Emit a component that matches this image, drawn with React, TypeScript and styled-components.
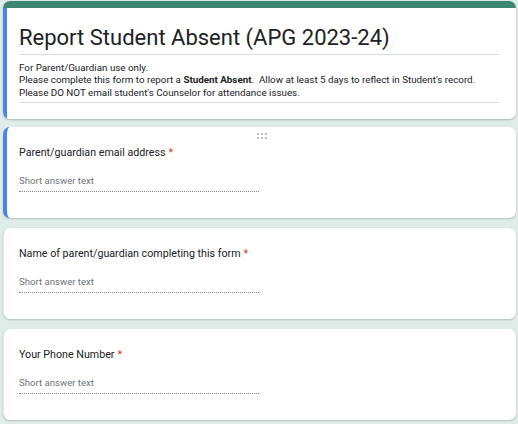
import React from "react";
import styled, { createGlobalStyle } from "styled-components";

const Global = createGlobalStyle`
  html, body { margin: 0; padding: 0; background: #e0ece8; }
  body { font-family: Roboto, "Liberation Sans", Arial, sans-serif; color: #202124; }
`;

const Page = styled.div`
  display: flex;
  flex-direction: column;
  gap: 10px;
  padding: 1px 2px 4px 3px;
`;

const HeaderCard = styled.div`
  background: #fff;
  border-radius: 7px;
  overflow: hidden;
  box-shadow: 0 1px 2px rgba(0,0,0,0.25);
  display: flex;
  flex-direction: column;
  margin-bottom: -2px;
`;

const TopBar = styled.div`
  height: 7px;
  background: #3d8670;
`;

const HeaderBody = styled.div`
  border-left: 4px solid #4a84f0;
  padding: 15px 17px 16px 12px;
`;

const Title = styled.h1`
  margin: 0;
  font-size: 22px;
  font-weight: 400;
  line-height: 30px;
  padding-bottom: 1px;
  border-bottom: 1px solid #dadce0;
  color: #202124;
`;

const Desc = styled.div`
  font-size: 9.8px;
  line-height: 12.4px;
  padding: 7px 0 3px;
  border-bottom: 1px solid #dadce0;
  color: #202124;
  b { font-weight: 700; }
`;

const QCard = styled.div<{ $active?: boolean }>`
  position: relative;
  background: #fff;
  border-radius: 7px;
  box-shadow: 0 1px 2px rgba(0,0,0,0.2);
  border-left: ${(p) => (p.$active ? "4px solid #4a84f0" : "1px solid #e3e5e8")};
  padding: 17px 16px 26px ${(p) => (p.$active ? "12px" : "15px")};
`;

const Handle = styled.div`
  position: absolute;
  top: 6px;
  left: 50%;
  transform: translateX(-50%);
  display: grid;
  grid-template-columns: repeat(3, 2px);
  gap: 2px;
  div { width: 2px; height: 2px; background: #bfc2c6; }
`;

const Label = styled.div`
  font-size: 10.7px;
  line-height: 18px;
  color: #202124;
`;

const Star = styled.span`
  color: #d93025;
  margin-left: 3px;
`;

const Answer = styled.div`
  margin-top: 12px;
  width: 240px;
  font-size: 9.6px;
  line-height: 14px;
  color: #70757a;
  padding-bottom: 3px;
  border-bottom: 1px dotted #80868b;
`;

const Question = ({ label, active }: { label: string; active?: boolean }) => (
  <QCard $active={active}>
    {active && (
      <Handle>
        {Array.from({ length: 6 }).map((_, i) => (
          <div key={i} />
        ))}
      </Handle>
    )}
    <Label>
      {label}
      <Star>*</Star>
    </Label>
    <Answer>Short answer text</Answer>
  </QCard>
);

export default function App() {
  return (
    <>
      <Global />
      <Page>
        <HeaderCard>
          <TopBar />
          <HeaderBody>
            <Title>Report Student Absent (APG 2023-24)</Title>
            <Desc>
              For Parent/Guardian use only.
              <br />
              Please complete this form to report a <b>Student Absent</b>.&nbsp; Allow at least 5 days to reflect in Student's record.
              <br />
              Please DO NOT email student's Counselor for attendance issues.
            </Desc>
          </HeaderBody>
        </HeaderCard>
        <Question label="Parent/guardian email address" active />
        <Question label="Name of parent/guardian completing this form" />
        <Question label="Your Phone Number" />
      </Page>
    </>
  );
}
